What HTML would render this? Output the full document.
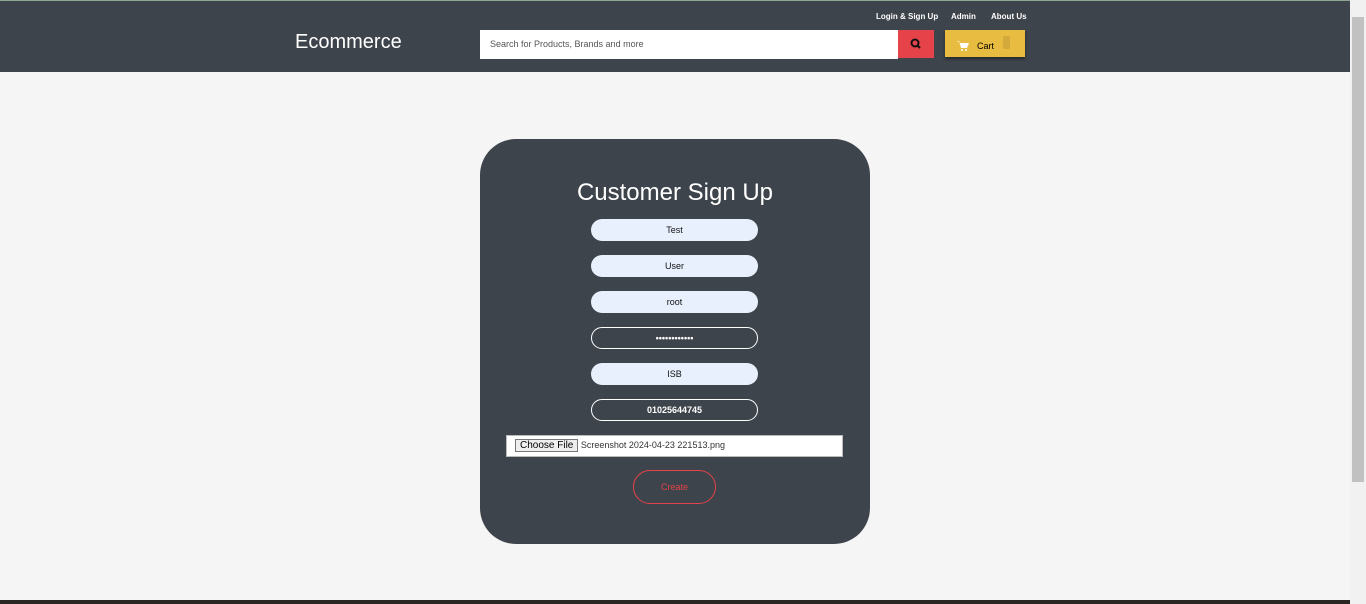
<!DOCTYPE html>
<html><head><meta charset="utf-8"><style>
*{box-sizing:border-box;margin:0;padding:0}
body{width:1366px;height:604px;overflow:hidden;background:#f5f5f5;font-family:"Liberation Sans",Arial,sans-serif;position:relative}
.top{position:absolute;left:0;top:0;width:1350px;height:1px;background:#8fa58f}
.hdr{position:absolute;left:0;top:1px;width:1350px;height:71px;background:#3e444b}
.logo{position:absolute;left:295px;top:30px;color:#fff;font-size:20px}
.links{position:absolute;top:11px;color:#fff;font-size:8px;font-weight:bold}
.search{position:absolute;left:480px;top:30px;width:418px;height:29px;background:#fff;font-size:9px;color:#555;padding:9px 10px}
.sbtn{position:absolute;left:898px;top:30px;width:36px;height:28px;background:#e5424a}
.cart{position:absolute;left:945px;top:30px;width:80px;height:27px;background:#e8bb41;box-shadow:0 2px 3px rgba(0,0,0,.4);font-size:9px}
.card{position:absolute;left:480px;top:139px;width:390px;height:405px;background:#3e444b;border-radius:36px}
h1{position:absolute;left:0;width:390px;top:40px;text-align:center;color:#fff;font-weight:normal;font-size:24px}
.in{position:absolute;left:111px;width:167px;height:22px;border-radius:11px;background:#e8f0fe;text-align:center;font-size:9px;line-height:22px;color:#111}
.in.d{background:transparent;border:1px solid #fff;color:#fff;font-weight:bold;line-height:20px}
.file{position:absolute;left:26px;top:296px;width:337px;height:22px;background:#fff;border:1px solid #bbb;font-size:9px;color:#333;padding:3px 8px}
.file span{display:inline-block;background:#eee;border:1px solid #777;padding:0 4px;color:#000;font-size:10px}
.create{position:absolute;left:153px;top:331px;width:83px;height:34px;border:1px solid #e5424a;border-radius:17px;color:#e5424a;font-size:9px;text-align:center;line-height:32px}
.sb{position:absolute;left:1350px;top:0;width:16px;height:604px;background:#f1f1f1}
.thumb{position:absolute;left:1352px;top:17px;width:12px;height:465px;background:#c1c1c1}
.bot{position:absolute;left:0;top:600px;width:1350px;height:4px;background:#2a2522}
</style></head><body>
<div class="top"></div>
<div class="hdr">
<div class="logo">Ecommerce</div>
<div class="links" style="left:876px">Login &amp; Sign Up</div>
<div class="links" style="left:951px">Admin</div>
<div class="links" style="left:991px">About Us</div>
</div>
<div class="search">Search for Products, Brands and more</div>
<div class="sbtn"><svg width="36" height="28"><circle cx="17" cy="13" r="3.5" fill="none" stroke="#111" stroke-width="2"/><line x1="19.5" y1="15.5" x2="22" y2="18" stroke="#111" stroke-width="2"/></svg></div>
<div class="cart"><svg style="position:absolute;left:12px;top:10px" width="12" height="11"><path d="M0 1h2l2 7h6l2-5H3" fill="#fff"/><circle cx="5" cy="10" r="1" fill="#fff"/><circle cx="9" cy="10" r="1" fill="#fff"/></svg><span style="position:absolute;left:32px;top:11px">Cart</span><span style="position:absolute;left:58px;top:6px;width:7px;height:13px;background:#d2a93a;border-radius:2px"></span></div>
<div class="card">
<h1>Customer Sign Up</h1>
<div class="in" style="top:80px">Test</div>
<div class="in" style="top:116px">User</div>
<div class="in" style="top:152px">root</div>
<div class="in d" style="top:188px">••••••••••••</div>
<div class="in" style="top:224px">ISB</div>
<div class="in d" style="top:260px">01025644745</div>
<div class="file"><span>Choose File</span> Screenshot 2024-04-23 221513.png</div>
<div class="create">Create</div>
</div>
<div class="sb"></div><div class="thumb"></div>
<div class="bot"></div>
</body></html>
